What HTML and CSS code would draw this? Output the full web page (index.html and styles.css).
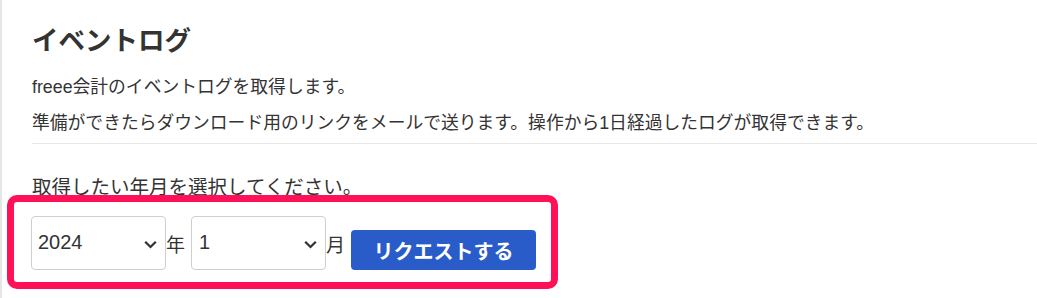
FILE: index.html
```html
<!DOCTYPE html>
<html lang="ja">
<head>
<meta charset="utf-8">
<title>イベントログ</title>
<link rel="stylesheet" href="styles.css">
</head>
<body>
<div class="page">
  <h1 class="title">イベントログ</h1>
  <p class="desc">freee会計のイベントログを取得します。</p>
  <p class="desc">準備ができたらダウンロード用のリンクをメールで送ります。操作から1日経過したログが取得できます。</p>
  <hr class="divider">
  <p class="prompt">取得したい年月を選択してください。</p>
  <div class="form-row">
    <div class="select">
      <span class="value">2024</span>
      <svg class="chev" width="13" height="9" viewBox="0 0 13 9"><path d="M1.2 1.8 L6.5 7 L11.8 1.8" fill="none" stroke="#333" stroke-width="2.3"/></svg>
    </div>
    <span class="unit">年</span>
    <div class="select select-month">
      <span class="value">1</span>
      <svg class="chev" width="13" height="9" viewBox="0 0 13 9"><path d="M1.2 1.8 L6.5 7 L11.8 1.8" fill="none" stroke="#333" stroke-width="2.3"/></svg>
    </div>
    <span class="unit">月</span>
    <button class="btn" type="button">リクエストする</button>
  </div>
  <div class="highlight"></div>
</div>
</body>
</html>
```
FILE: styles.css
```css
html, body {
  margin: 0;
  padding: 0;
  background: #fff;
}
body {
  font-family: "Liberation Sans", "Noto Sans CJK JP", sans-serif;
  color: #333;
}
.page {
  position: relative;
  border-left: 2px solid #e6e6e6;
  min-height: 298px;
  box-sizing: border-box;
  padding: 22px 0 0 30px;
  overflow: hidden;
}
.title {
  margin: 0;
  font-size: 26.5px;
  font-weight: bold;
  line-height: 39px;
  color: #333;
}
.desc {
  margin: 0;
  font-size: 17.8px;
  line-height: 36px;
}
.title + .desc {
  margin-top: 8px;
}
.divider {
  margin: 2px 0 0 0;
  border: 0;
  border-top: 1px solid #e8e8e8;
  height: 0;
}
.prompt {
  margin: 25px 0 0 0;
  font-size: 19.5px;
  line-height: 36px;
}
.form-row {
  display: flex;
  align-items: flex-end;
  margin-top: 11px;
}
.select {
  width: 135px;
  height: 54px;
  box-sizing: border-box;
  border: 1px solid #cfcfcf;
  border-radius: 4px;
  display: flex;
  align-items: center;
  justify-content: space-between;
  padding: 0 8px 0 6px;
  margin-left: -1px;
  font-size: 20px;
  color: #333;
  background: #fff;
}
.select-month {
  margin-left: 6px;
  padding-left: 7px;
}
.value {
  line-height: 1;
  margin-top: -2px;
}
.chev {
  display: block;
  margin-top: 2px;
}
.unit {
  font-size: 19px;
  line-height: 19px;
  margin-bottom: 15px;
}
.btn {
  width: 185px;
  height: 40px;
  margin-left: 6px;
  border: 0;
  border-radius: 4px;
  background: #2a5cc9;
  color: #fff;
  font-family: "Liberation Sans", "Noto Sans CJK JP", sans-serif;
  font-size: 20px;
  font-weight: bold;
  padding: 0;
}
.highlight {
  position: absolute;
  left: 5px;
  top: 195px;
  width: 551px;
  height: 94px;
  box-sizing: border-box;
  border: 7px solid #ff1158;
  border-radius: 10px;
  pointer-events: none;
}
```
